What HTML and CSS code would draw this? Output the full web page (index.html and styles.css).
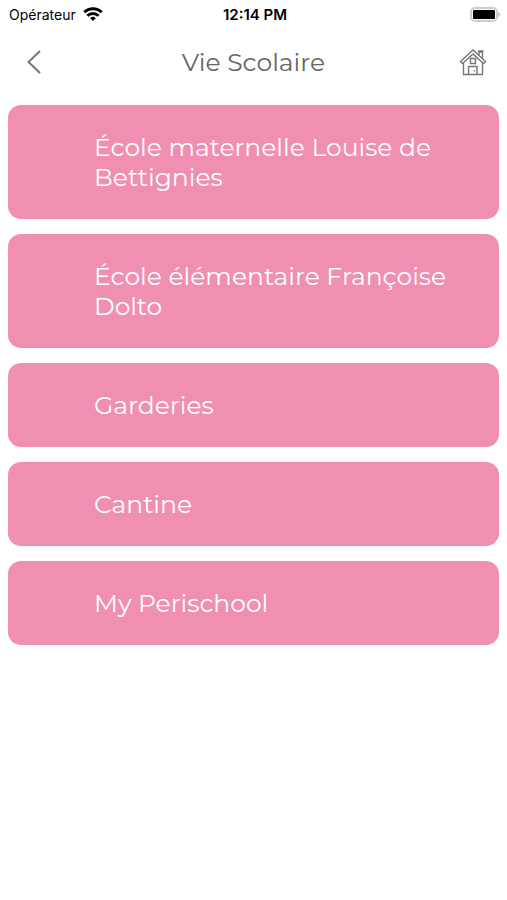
FILE: index.html
```html
<!DOCTYPE html>
<html lang="fr">
<head>
    <meta charset="UTF-8">
    <meta name="viewport" content="width=device-width, initial-scale=1.0">
    <title>Vie Scolaire</title>
    <link rel="stylesheet" href="styles.css">
</head>
<body>
    <div class="status-bar">
        <div class="carrier">
            <span>Opérateur</span>
            <svg class="wifi" viewBox="0 0 20 14" aria-hidden="true">
                <path d="M1.3 5.2a12.4 12.4 0 0 1 17.4 0" />
                <path d="M4.4 8.7a8 8 0 0 1 11.2 0" />
                <path class="dot" d="M10 14L7.2 11.2a4 4 0 0 1 5.6 0z" />
            </svg>
        </div>
        <div class="time">12:14 PM</div>
        <svg class="battery" viewBox="0 0 31 15" aria-hidden="true">
            <rect class="shell" x="1" y="1" width="26" height="13" rx="4" />
            <rect x="3" y="3" width="22" height="9" rx="1" />
            <path class="cap" d="M28 5q2.5 .8 2.5 2.5t-2.5 2.5z" />
        </svg>
    </div>

    <header class="header">
        <button type="button" class="icon-button" aria-label="Retour">
            <svg class="back" viewBox="0 0 14 24"><path d="M13 1L1.5 12L13 23" /></svg>
        </button>
        <h1>Vie Scolaire</h1>
        <a href="#" class="icon-button" aria-label="Accueil">
            <svg class="home" viewBox="0 0 28 28">
                <path d="M1.5 13.5L14 2L26.5 13.5L24.5 15.5L14 6L3.5 15.5z" />
                <path d="M4.5 15v11.5h19V15M20 7.5V4h3.5v7M19 3h5.5" />
                <path d="M9.5 26.5v-8h8.500v8M11.5 10.5h5v5h-5zM15.5 22v1.5" />
            </svg>
        </a>
    </header>

    <nav class="menu">
        <a href="#" class="menu-item">École maternelle Louise de Bettignies</a>
        <a href="#" class="menu-item">École élémentaire Françoise Dolto</a>
        <a href="#" class="menu-item">Garderies</a>
        <a href="#" class="menu-item">Cantine</a>
        <a href="#" class="menu-item">My Perischool</a>
    </nav>
</body>
</html>
```

FILE: styles.css
```css
* {
    box-sizing: border-box;
}

body {
    margin: 0;
    background-color: white;
    font-family: Montserrat, Inter, sans-serif;
}

.status-bar {
    display: grid;
    grid-template-columns: 1fr auto 1fr;
    align-items: center;
    height: 28px;
    padding: 0 6px 0 9px;
    color: black;
    font-family: Inter, sans-serif;
    font-size: 14px;
}

.carrier {
    display: flex;
    align-items: center;
    gap: 7px;
}

.wifi {
    width: 20px;
    height: 14px;
    fill: none;
    stroke: black;
    stroke-width: 3;
}

.wifi .dot {
    fill: black;
    stroke: none;
}

.time {
    font-size: 15px;
    font-weight: 600;
}

.battery {
    justify-self: end;
    width: 31px;
    height: 15px;
}

.battery .shell {
    fill: none;
    stroke: #ccc;
    stroke-width: 2;
}

.battery .cap {
    fill: #ccc;
}

.header {
    display: flex;
    justify-content: space-between;
    align-items: center;
    height: 68px;
    padding: 0 12px;
}

.header h1 {
    margin: 0;
    color: #666;
    font-size: 25px;
    font-weight: 400;
}

.icon-button {
    display: flex;
    justify-content: center;
    align-items: center;
    width: 44px;
    height: 44px;
    padding: 0;
    border: none;
    background: none;
}

.icon-button svg {
    fill: none;
    stroke: #777;
}

.back {
    width: 14px;
    height: 24px;
    stroke-width: 2;
}

.home {
    width: 28px;
    height: 28px;
    stroke-width: 1.4;
}

.menu {
    display: flex;
    flex-direction: column;
    gap: 15px;
    padding: 9px 8px;
}

.menu-item {
    padding: 27px 48px 27px 86px;
    border-radius: 13px;
    background-color: #f08fb2;
    color: white;
    font-size: 25px;
    font-weight: 400;
    line-height: 30px;
    text-decoration: none;
}
```
